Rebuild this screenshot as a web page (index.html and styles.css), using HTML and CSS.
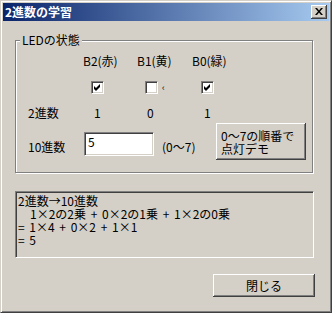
FILE: index.html
```html
<!DOCTYPE html>
<html lang="ja">
<head>
<meta charset="utf-8">
<title>2進数の学習</title>
<link rel="stylesheet" href="styles.css">
</head>
<body>
<div class="window">
  <div class="titlebar">
    <span class="title">2進数の学習</span>
    <button class="close-btn" aria-label="閉じる">
      <svg width="8" height="7" viewBox="0 0 8 7"><path d="M0 0h2l2 2.4L6 0h2L5 3.5 8 7H6L4 4.6 2 7H0l3-3.5z" fill="#000"/></svg>
    </button>
  </div>
  <div class="client">
    <div class="group">
      <div class="legend">LEDの状態</div>
      <div class="bits">
        <span></span>
        <span class="head">B2(赤)</span>
        <span class="head">B1(黄)</span>
        <span class="head">B0(緑)</span>

        <span></span>
        <span class="cell chk-cell c2"><span class="chk"><svg width="7" height="7" viewBox="0 0 7 7"><path d="M0 2L2 4L6 0V3L2 7L0 5Z" fill="#000"/></svg></span></span>
        <span class="cell chk-cell c1"><span class="chk"></span><span class="mark">‹</span></span>
        <span class="cell chk-cell c0"><span class="chk"><svg width="7" height="7" viewBox="0 0 7 7"><path d="M0 2L2 4L6 0V3L2 7L0 5Z" fill="#000"/></svg></span></span>

        <span class="cell">2進数</span>
        <span class="cell val v2">1</span>
        <span class="cell val v1">0</span>
        <span class="cell val v0">1</span>
      </div>
      <div class="dec-row">
        <span class="dec-label">10進数</span>
        <div class="input">5</div>
        <span class="range">(0～7)</span>
        <button class="btn demo-btn"><span class="demo-line">0～7の順番で</span><span class="demo-line">点灯デモ</span></button>
      </div>
    </div>
    <div class="edit">
      <div class="edit-line">2進数→10進数</div>
      <div class="edit-line">　1×2の2乗 + 0×2の1乗 + 1×2の0乗</div>
      <div class="edit-line">= 1×4 + 0×2 + 1×1</div>
      <div class="edit-line">= 5</div>
    </div>
    <div class="footer">
      <button class="btn close-main">閉じる</button>
    </div>
  </div>
</div>
</body>
</html>
```
FILE: styles.css
```css
* { box-sizing: border-box; }

body {
  margin: 0;
  background: #D4D0C8;
  font-family: "MS UI Gothic", "Noto Sans CJK JP", sans-serif;
  font-size: 12px;
  line-height: 14px;
  color: #000;
}

.window {
  width: 332px;
  height: 313px;
  border: 1px solid;
  border-color: #D4D0C8 #404040 #404040 #D4D0C8;
  box-shadow: inset 1px 1px #FFFFFF, inset -1px -1px #808080;
  padding: 2px;
  background: #D4D0C8;
  overflow: hidden;
}

.titlebar {
  height: 18px;
  display: flex;
  align-items: center;
  justify-content: space-between;
  padding: 0 2px 0 2px;
  background: linear-gradient(to right, #0A246A, #A6CAF0);
}

.title {
  color: #FFFFFF;
  font-weight: bold;
  font-size: 12px;
  line-height: 14px;
}

.close-btn {
  width: 16px;
  height: 14px;
  padding: 0;
  border: 0;
  background: #D4D0C8;
  box-shadow: inset -1px -1px #404040, inset 1px 1px #FFFFFF, inset -2px -2px #808080, inset 2px 2px #D4D0C8;
  display: flex;
  align-items: center;
  justify-content: center;
}

.close-btn svg { display: block; margin-top: -1px; }

.client {
  padding-left: 12px;
  padding-top: 19px;
}

.group {
  width: 298px;
  height: 133px;
  border: 1px solid #808080;
  box-shadow: inset 1px 1px #FFFFFF, 1px 1px #FFFFFF;
}

.legend {
  width: max-content;
  margin-top: -8px;
  margin-left: 4px;
  padding: 0 2px;
  background: #D4D0C8;
  line-height: 14px;
}

.bits {
  margin-top: 7px;
  padding-left: 12px;
  display: grid;
  grid-template-columns: 55px 54px 55px 1fr;
  grid-template-rows: 14px 26px 26px;
  align-items: end;
}

.head { align-self: start; }

.chk-cell {
  display: flex;
  align-items: center;
  height: 13px;
}
.c2 { padding-left: 8px; }
.c1 { padding-left: 8px; }
.c0 { padding-left: 9px; }

.chk {
  width: 13px;
  height: 13px;
  background: #FFFFFF;
  border: 1px solid;
  border-color: #808080 #FFFFFF #FFFFFF #808080;
  box-shadow: inset 1px 1px #404040, inset -1px -1px #D4D0C8;
  display: flex;
  align-items: center;
  justify-content: center;
}
.chk svg { display: block; }

.mark {
  font-size: 9px;
  line-height: 9px;
  margin-left: 4px;
}

.val { line-height: 14px; }
.v2 { padding-left: 11px; }
.v1 { padding-left: 10px; }
.v0 { padding-left: 12px; }

.dec-row {
  margin-top: 3px;
  padding-left: 12px;
  padding-right: 6px;
  display: flex;
  align-items: flex-start;
}

.dec-label {
  width: 56px;
  margin-top: 17px;
}

.input {
  width: 70px;
  height: 24px;
  margin-top: 9px;
  background: #FFFFFF;
  border: 1px solid;
  border-color: #808080 #FFFFFF #FFFFFF #808080;
  box-shadow: inset 1px 1px #404040, inset -1px -1px #D4D0C8;
  padding: 2px 3px;
  line-height: 14px;
}

.range {
  margin-left: 8px;
  margin-top: 17px;
}

.btn {
  font: inherit;
  color: #000;
  border: 0;
  background: #D4D0C8;
  box-shadow: inset -1px -1px #404040, inset 1px 1px #FFFFFF, inset -2px -2px #808080, inset 2px 2px #D4D0C8;
  padding: 0;
}

.demo-btn {
  margin-left: auto;
  width: 90px;
  height: 37px;
  text-align: left;
  padding-left: 5px;
  display: flex;
  flex-direction: column;
  justify-content: center;
}

.demo-line {
  display: block;
  line-height: 13px;
  white-space: nowrap;
}

.edit {
  margin-top: 18px;
  width: 299px;
  height: 67px;
  border: 1px solid;
  border-color: #808080 #FFFFFF #FFFFFF #808080;
  box-shadow: inset 1px 1px #404040, inset -1px -1px #D4D0C8;
  padding: 2px 2px;
}

.edit-line {
  line-height: 13px;
  white-space: nowrap;
  word-spacing: 2px;
}

.footer {
  margin-top: 16px;
  display: flex;
  justify-content: flex-end;
  padding-right: 14px;
}

.close-main {
  width: 102px;
  height: 23px;
  text-align: center;
}
```
